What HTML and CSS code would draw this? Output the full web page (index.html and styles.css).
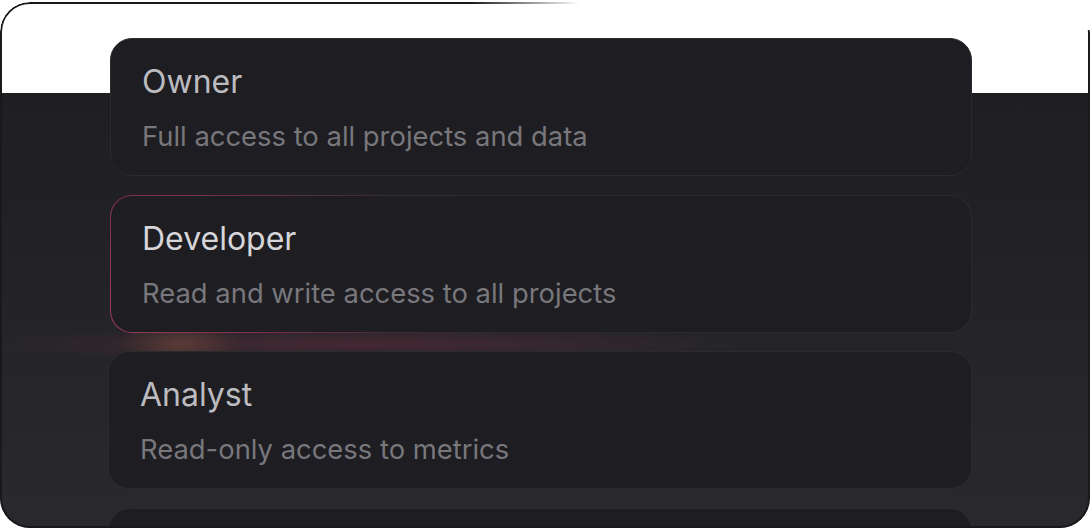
FILE: index.html
```html
<!DOCTYPE html>
<html lang="en">
<head>
<meta charset="utf-8">
<title>Roles</title>
<link rel="stylesheet" href="styles.css">
</head>
<body>
<div class="frame">
  <div class="roles">
    <div class="card">
      <div class="title">Owner</div>
      <div class="desc">Full access to all projects and data</div>
    </div>
    <div class="card card-active">
      <div class="title">Developer</div>
      <div class="desc">Read and write access to all projects</div>
    </div>
    <div class="card card-shift">
      <div class="title">Analyst</div>
      <div class="desc">Read-only access to metrics</div>
    </div>
    <div class="card card-shift"></div>
  </div>
</div>
</body>
</html>
```
FILE: styles.css
```css
html, body {
  margin: 0;
  padding: 0;
  background: #ffffff;
  overflow: hidden;
}

body {
  font-family: "Inter", "Noto Sans", sans-serif;
}

.frame {
  position: relative;
  box-sizing: border-box;
  width: 1090px;
  height: 526px;
  margin-top: 2px;
  border-radius: 30px;
  overflow: hidden;
  padding: 36px 0 0 110px;
  background:
    radial-gradient(ellipse 60px 26px at 180px 342px, rgba(160, 95, 70, 0.35), rgba(160, 95, 70, 0) 100%),
    radial-gradient(ellipse 380px 18px at 360px 342px, rgba(110, 45, 65, 0.45), rgba(110, 45, 65, 0) 100%),
    linear-gradient(#ffffff 0, #ffffff 91px, #1f1f22 91px, #212124 200px, #2a2a2e 100%);
}

.frame::before {
  content: "";
  position: absolute;
  inset: 0;
  border: 2px solid #19191b;
  border-radius: 30px;
  pointer-events: none;
  -webkit-mask-image: linear-gradient(to right, #000 470px, transparent 580px), linear-gradient(to bottom, transparent 28px, #000 28px);
  mask-image: linear-gradient(to right, #000 470px, transparent 580px), linear-gradient(to bottom, transparent 28px, #000 28px);
}

.roles {
  display: flex;
  flex-direction: column;
  gap: 18.5px;
  width: 862px;
}

.card {
  box-sizing: border-box;
  height: 138px;
  flex-shrink: 0;
  padding: 24px 31px 0;
  background: #1e1d21;
  border: 1px solid #2b2a2f;
  border-radius: 22px;
}

.card-active {
  border-color: transparent;
  background:
    linear-gradient(#1e1d21, #1e1d21) padding-box,
    radial-gradient(circle at 0% 100%, #9a3b5c 0, #7a3049 160px, #3a2c33 300px, #2b2a2f 420px) border-box;
}

.card-shift {
  margin-left: -2px;
}

.title {
  font-size: 32px;
  line-height: 38px;
  color: #bcbcc0;
}

.card-active .title {
  color: #d6d6da;
}

.desc {
  margin-top: 19px;
  font-size: 27.4px;
  line-height: 32px;
  color: #77777c;
}
```
